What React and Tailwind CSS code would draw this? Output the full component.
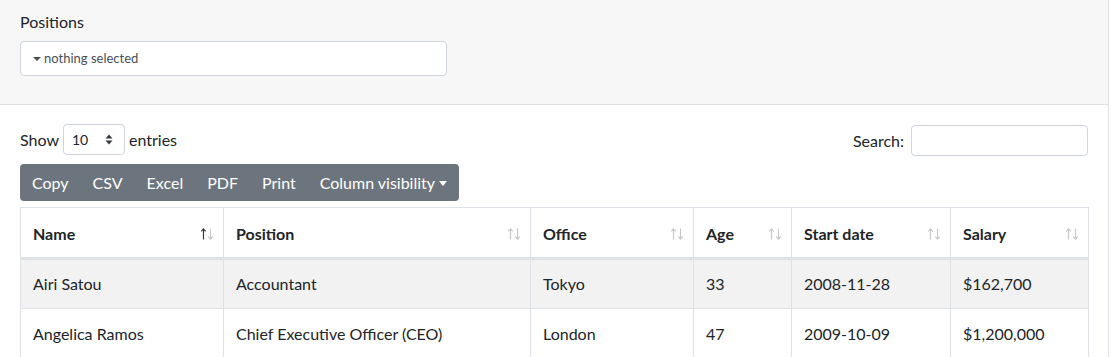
import { useState } from "react";

const rows = [
  { name: "Airi Satou", position: "Accountant", office: "Tokyo", age: "33", start: "2008-11-28", salary: "$162,700" },
  { name: "Angelica Ramos", position: "Chief Executive Officer (CEO)", office: "London", age: "47", start: "2009-10-09", salary: "$1,200,000" },
];

const columns = [
  { key: "name", label: "Name", width: "w-[203px]" },
  { key: "position", label: "Position", width: "w-[307px]" },
  { key: "office", label: "Office", width: "w-[163px]" },
  { key: "age", label: "Age", width: "w-[98px]" },
  { key: "start", label: "Start date", width: "w-[159px]" },
  { key: "salary", label: "Salary", width: "w-[138px]" },
];

function SortIcon({ active }) {
  return (
    <svg width="14" height="12" viewBox="0 0 14 12" className="shrink-0">
      <g fill="none" strokeWidth="1.2">
        <path d="M3.5 11.5V1M1.3 3.3L3.5 0.9l2.2 2.4" stroke={active ? "#3a3a3a" : "#c8c8c8"} />
        <path d="M10.5 0.5v10.5M8.3 8.7l2.2 2.4 2.2-2.4" stroke="#c8c8c8" />
      </g>
    </svg>
  );
}

function ButtonBar() {
  const buttons = ["Copy", "CSV", "Excel", "PDF", "Print"];
  return (
    <div className="flex h-[37px] w-fit items-center rounded-[4px] bg-[#6c757d] text-white">
      {buttons.map((b) => (
        <button key={b} type="button" className="h-full px-3 text-base">
          {b}
        </button>
      ))}
      <button type="button" className="flex h-full items-center gap-1 px-3 text-base">
        Column visibility
        <span className="mt-[1px] h-0 w-0 border-x-[4px] border-t-[5px] border-x-transparent border-t-white" />
      </button>
    </div>
  );
}

export default function App() {
  const [search, setSearch] = useState("");

  return (
    <div className="h-[357px] w-[1111px] overflow-hidden bg-white font-['Segoe_UI','Lato',sans-serif] text-[#212529]">
      <div className="w-[1109px] border-r border-[#dfdfdf]">
        <div className="h-[105px] border-b border-[#dfdfdf] bg-[#f7f7f7] px-5 pt-[10px]">
          <label className="block text-base leading-6">Positions</label>
          <div className="mt-[7px] flex h-[35px] w-[427px] items-center gap-[3px] rounded-[4px] border border-[#ced4da] bg-white px-3 text-[13px] text-[#495057]">
            <span className="mt-[1px] h-0 w-0 border-x-[4px] border-t-[4px] border-x-transparent border-t-[#495057]" />
            nothing selected
          </div>
        </div>

        <div className="px-5 pt-5">
          <div className="flex items-center justify-between">
            <div className="-mt-[2px] flex items-center gap-[4px] text-base">
              <span>Show</span>
              <div className="flex h-[31px] w-[62px] items-center justify-between rounded-[4px] border border-[#ced4da] pl-2 pr-[11px] text-sm">
                <span>10</span>
                <svg width="8" height="11" viewBox="0 0 8 11">
                  <path d="M4 0.5L7.5 4.5H0.5Z M4 10.5L7.5 6.5H0.5Z" fill="#343a40" />
                </svg>
              </div>
              <span>entries</span>
            </div>
            <div className="flex items-center gap-[7px] text-base">
              <span>Search:</span>
              <input
                value={search}
                onChange={(e) => setSearch(e.target.value)}
                className="h-[31px] w-[177px] rounded-[4px] border border-[#ced4da] outline-none"
              />
            </div>
          </div>

          <div className="mt-[8px]">
            <ButtonBar />
          </div>

          <table className="mt-[6px] w-[1069px] table-fixed border-collapse border border-[#dee2e6] text-base">
            <thead>
              <tr className="border-b-[3px] border-[#dee2e6]">
                {columns.map((c, i) => (
                  <th key={c.key} className={`${c.width} h-[51px] border-x border-[#dee2e6] pl-3 pr-[9px] text-left font-bold`}>
                    <div className="flex items-center justify-between pt-[2px]">
                      <span>{c.label}</span>
                      <SortIcon active={i === 0} />
                    </div>
                  </th>
                ))}
              </tr>
            </thead>
            <tbody>
              {rows.map((r, idx) => (
                <tr key={r.name} className={`border-b border-[#dee2e6] ${idx % 2 === 0 ? "bg-[#f2f2f2]" : "bg-white"}`}>
                  {columns.map((c) => (
                    <td key={c.key} className="h-[50px] border-x border-[#dee2e6] px-3">
                      {r[c.key]}
                    </td>
                  ))}
                </tr>
              ))}
            </tbody>
          </table>
        </div>
      </div>
    </div>
  );
}
